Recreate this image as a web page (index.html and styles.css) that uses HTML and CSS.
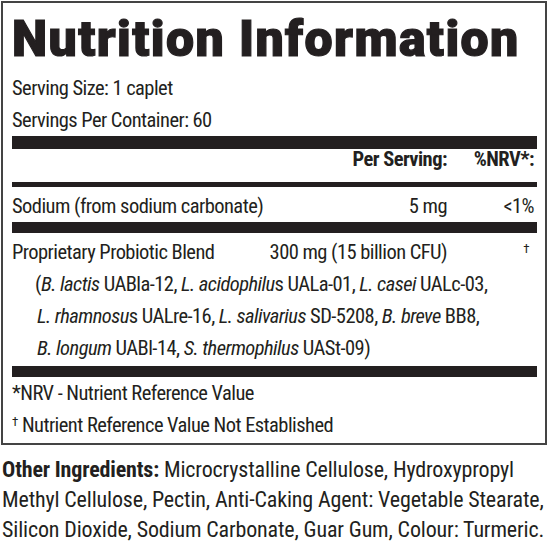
FILE: index.html
```html
<!DOCTYPE html>
<html lang="en">

<head>
  <meta charset="UTF-8">
  <meta name="viewport" content="width=device-width, initial-scale=1.0">
  <title>Nutrition Information</title>
  <link rel="stylesheet" href="styles.css">
</head>

<body>
  <div class="label">
    <div class="panel">
      <h1 class="title">Nutrition Information</h1>
      <p class="line">Serving Size: 1 caplet</p>
      <p class="line">Servings Per Container: 60</p>

      <div class="bar bar-thick"></div>

      <div class="row row-head">
        <span class="name"></span>
        <span class="amount">Per Serving:</span>
        <span class="nrv">%NRV*:</span>
      </div>

      <div class="bar bar-thin"></div>

      <div class="row row-sodium">
        <span class="name">Sodium (from sodium carbonate)</span>
        <span class="amount">5 mg</span>
        <span class="nrv">&lt;1%</span>
      </div>

      <div class="bar bar-mid"></div>

      <div class="row row-blend">
        <span class="name">Proprietary Probiotic Blend</span>
        <span class="amount">300 mg (15 billion CFU)</span>
        <span class="nrv"><span class="dagger">†</span></span>
      </div>
      <p class="blend">
        (<i>B. lactis</i> UABla-12, <i>L. acidophilu</i>s UALa-01, <i>L. casei</i> UALc-03,<br>
        <i>L. rhamnosu</i>s UALre-16, <i>L. salivarius</i> SD-5208, <i>B. breve</i> BB8,<br>
        <i>B. longum</i> UABl-14, <i>S. thermophilus</i> UASt-09)
      </p>

      <div class="bar bar-mid bar-foot"></div>

      <p class="line">*NRV - Nutrient Reference Value</p>
      <p class="line"><span class="dagger">†</span> Nutrient Reference Value Not Established</p>
    </div>

    <p class="ingredients">
      <b>Other Ingredients:</b> Microcrystalline Cellulose, Hydroxypropyl<br>
      Methyl Cellulose, Pectin, Anti-Caking Agent: Vegetable Stearate,<br>
      Silicon Dioxide, Sodium Carbonate, Guar Gum, Colour: Turmeric.
    </p>
  </div>
</body>

</html>
```

FILE: styles.css
```css
body {
  margin: 0;
  background-color: white;
  color: #231f20;
  font-family: Roboto, "Liberation Sans", sans-serif;
  font-stretch: 75%;
  font-size: 20.5px;
  letter-spacing: -0.55px;
}

.label {
  width: 551px;
}

.panel {
  margin: 1px 4px 0 1px;
  padding: 0 8px 2px 9px;
  border: 2px solid #444;
}

.title {
  margin: 0;
  padding-top: 12px;
  margin-bottom: 8px;
  font-family: Roboto, "Liberation Sans", sans-serif;
  font-stretch: 100%;
  font-weight: 900;
  font-size: 50px;
  line-height: 49px;
  letter-spacing: 1.4px;
  -webkit-text-stroke: 1.2px #231f20;
  white-space: nowrap;
}

.line {
  margin: 0;
  line-height: 32px;
  white-space: nowrap;
}

.bar {
  background-color: #231f20;
}

.bar-thick {
  height: 13px;
}

.bar-thin {
  height: 5px;
}

.bar-mid {
  height: 11px;
}

.bar-foot {
  margin-top: 2px;
}

.row {
  display: flex;
  line-height: 32px;
  white-space: nowrap;
}

.row .name {
  flex: 1;
}

.row .amount {
  text-align: right;
}

.row .nrv {
  width: 90px;
  padding-right: 3px;
  box-sizing: border-box;
  text-align: right;
}

.row-head {
  font-weight: bold;
  line-height: 20px;
  padding-bottom: 13px;
}

.row-sodium,
.row-blend {
  padding-top: 3px;
}

.dagger {
  font-size: 13px;
  line-height: 13px;
  vertical-align: 6px;
}

.row .dagger {
  padding-right: 5px;
}

.blend {
  margin: 0;
  padding-left: 25px;
  text-indent: -2px;
  line-height: 32px;
  white-space: nowrap;
}

.ingredients {
  margin: 10px 0 0 2px;
  font-size: 22px;
  font-stretch: 80%;
  letter-spacing: -0.15px;
  line-height: 30px;
  white-space: nowrap;
}
```
